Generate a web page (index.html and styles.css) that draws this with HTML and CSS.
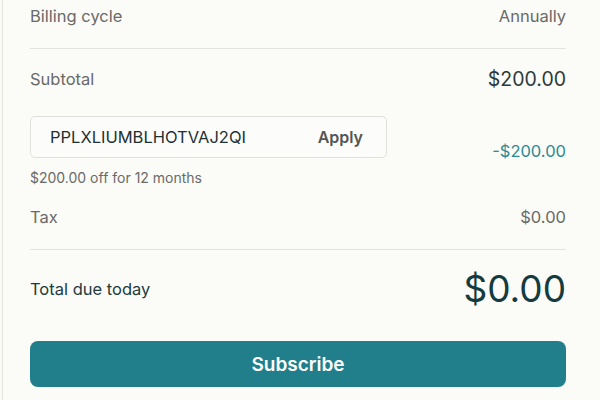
FILE: index.html
```html
<!DOCTYPE html>
<html lang="en">
<head>
    <meta charset="UTF-8">
    <meta name="viewport" content="width=device-width, initial-scale=1.0">
    <title>Checkout summary</title>
    <link rel="stylesheet" href="styles.css">
</head>
<body>

    <div class="panel">
        <div class="row first">
            <span class="label">Billing cycle</span>
            <span class="value">Annually</span>
        </div>

        <hr class="divider">

        <div class="row subtotal">
            <span class="label">Subtotal</span>
            <span class="value strong">$200.00</span>
        </div>

        <!-- Promo code block, discount sits centred beside it -->
        <div class="row promo">
            <div class="promo-left">
                <div class="promo-box">
                    <span class="promo-code">PPLXLIUMBLHOTVAJ2QI</span>
                    <button type="button" class="apply">Apply</button>
                </div>
                <div class="promo-note">$200.00 off for 12 months</div>
            </div>
            <span class="value discount">-$200.00</span>
        </div>

        <div class="row tax">
            <span class="label">Tax</span>
            <span class="value">$0.00</span>
        </div>

        <hr class="divider divider-low">

        <div class="row total">
            <span class="total-label">Total due today</span>
            <span class="total-value">$0.00</span>
        </div>

        <button type="button" class="subscribe">Subscribe</button>
    </div>

</body>
</html>
```

FILE: styles.css
```css
body {
    margin: 0;
    padding: 0;
    background-color: #fbfbf8;
    font-family: 'Inter', 'Liberation Sans', sans-serif;
    overflow: hidden;
}

.panel {
    margin-left: 2px;
    border-left: 1px solid #e4e4df;
    padding: 4px 34px 0 27px;
    min-height: 400px;
    box-sizing: border-box;
}

.row {
    display: flex;
    justify-content: space-between;
    align-items: center;
    line-height: 24px;
}

.label,
.value {
    font-size: 16.5px;
    color: #6a6a67;
}

.value.strong {
    font-size: 19.5px;
    color: #2c3a3b;
}

.divider {
    border: none;
    border-top: 1px solid #e2e2de;
    margin: 20px 0 0 0;
}

.subtotal {
    margin-top: 18px;
}

.promo {
    margin-top: 25px;
}

.promo-left {
    width: 357px;
}

.promo-box {
    display: flex;
    align-items: center;
    justify-content: space-between;
    height: 42px;
    box-sizing: border-box;
    border: 1px solid #e0e0dc;
    border-radius: 5px;
    background-color: #fcfcfa;
    padding: 0 23px 0 19px;
}

.promo-code {
    font-size: 16.5px;
    color: #1f3233;
}

.apply {
    border: none;
    background: none;
    padding: 0;
    font-family: inherit;
    font-size: 16px;
    font-weight: 600;
    color: #555553;
    cursor: pointer;
}

.promo-note {
    margin-top: 12px;
    font-size: 14px;
    line-height: 16px;
    color: #6a6a67;
}

.value.discount {
    color: #2b8a92;
}

.tax {
    margin-top: 19px;
}

.divider-low {
    margin-top: 20px;
}

.total {
    margin-top: 19px;
    line-height: 40px;
}

.total-label {
    font-size: 16.5px;
    color: #223a3c;
}

.total-value {
    font-size: 37px;
    color: #153b40;
}

.subscribe {
    display: block;
    width: 100%;
    height: 46px;
    margin-top: 32px;
    padding-top: 2px;
    border: none;
    border-radius: 8px;
    background-color: #217e8b;
    color: #fff;
    font-family: inherit;
    font-size: 19px;
    font-weight: 600;
    cursor: pointer;
}
```
